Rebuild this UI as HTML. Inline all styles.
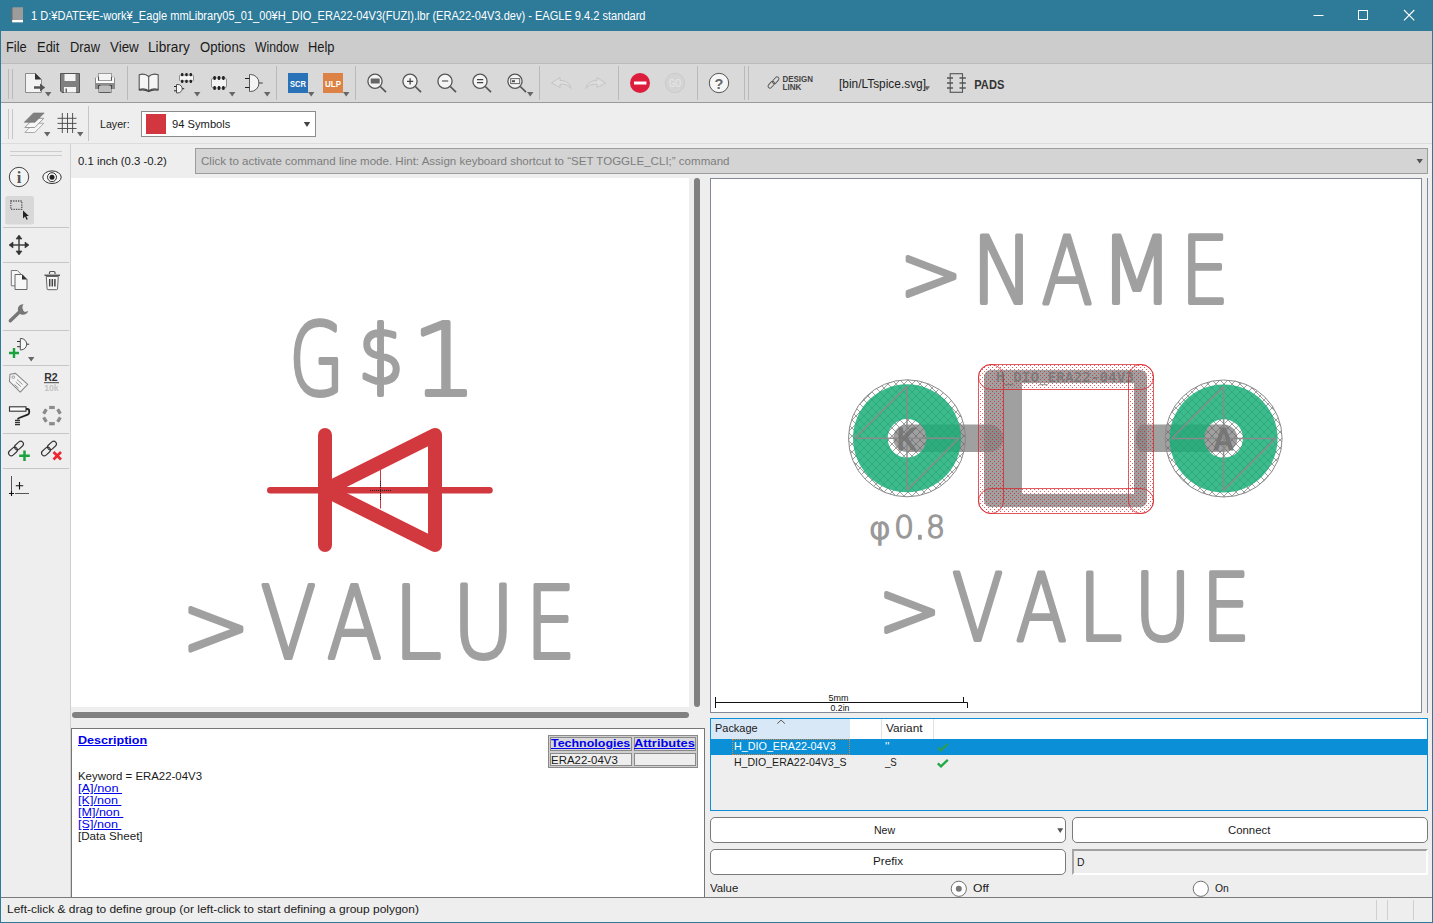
<!DOCTYPE html>
<html>
<head>
<meta charset="utf-8">
<title>EAGLE</title>
<style>
*{box-sizing:border-box;margin:0;padding:0}
html,body{width:1433px;height:923px;overflow:hidden;background:#eeeeee;font-family:"Liberation Sans","Noto Sans CJK JP",sans-serif;font-size:12px;color:#1a1a1a}
.abs{position:absolute}
#win{position:absolute;left:0;top:0;width:1433px;height:923px;background:#eeeeee;overflow:hidden}
#title{left:0;top:0;width:1433px;height:31px;background:#2d7a99}
#title .t{position:absolute;left:31px;top:7px;color:#fff;font-size:12.4px;white-space:nowrap;letter-spacing:0}
#menu{left:1px;top:31px;width:1431px;height:33px;background:#cccccc;border-bottom:1px solid #bcbcbc}
#menu span{position:absolute;top:7px;font-size:14.5px;color:#1a1a1a;white-space:nowrap}
#tb1{left:1px;top:64px;width:1431px;height:39px;background:#d9d9d9;border-bottom:1px solid #9a9a9a}
#tb2{left:1px;top:103px;width:1431px;height:41px;background:#eeeeee;border-bottom:1px solid #dcdcdc}
.vsep{position:absolute;width:1px;background:#b4b4b4}
#ltb{left:1px;top:144px;width:70px;height:753px;background:#eeeeee;border-right:1px solid #d0d0d0}
.hsep{position:absolute;left:3px;width:64px;height:1px;background:#c8c8c8}
#lb{left:0;top:31px;width:1px;height:892px;background:#2d7a99}
#rb{left:1432px;top:31px;width:1px;height:892px;background:#2d7a99}
#bb{left:0;top:922px;width:1433px;height:1px;background:#2d7a99}
#coord{left:78px;top:154px;font-size:12px;white-space:nowrap;color:#222}
#cmd{left:195px;top:148px;width:1233px;height:26px;background:#d4d4d4;border:1px solid #9c9c9c}
#cmd span{position:absolute;left:5px;top:4px;color:#7d7d7d;white-space:nowrap;font-size:12px}
#cvL{left:71px;top:178px;width:618px;height:529px;background:#fff}
#cvR{left:710px;top:178px;width:712px;height:535px}
#vsb{left:694px;top:178px;width:6px;height:529px;background:#808080;border-radius:3px}
#hsb{left:72px;top:712px;width:617px;height:6px;background:#808080;border-radius:3px}
#desc{left:71px;top:728px;width:634px;height:169px;background:#fff;border:1px solid #767676;border-bottom:none}
#status{left:1px;top:897px;width:1431px;height:24px;background:#eeeeee;border-top:1px solid #7a7a7a}
#status span{position:absolute;left:5px;top:5px;font-size:12px;white-space:nowrap}
#pkg{left:710px;top:718px;width:718px;height:93px;background:#eeeeee;border:1px solid #0d8fd8}
.btn{position:absolute;background:#fff;border:1px solid #7a7a7a;border-radius:5px;text-align:center;font-size:12px;line-height:24px}
a{color:#0000ee}
.dl{font-size:12px;line-height:12px;white-space:nowrap;transform-origin:0 0;transform:scaleX(.93);color:#111}
a.dl{color:#0000ee;text-decoration:underline}
.tc{border:1px solid #8a8a8a;font-size:12px;line-height:12px;white-space:nowrap;overflow:hidden}
.tc a{position:absolute;left:1px;top:0;font-weight:bold;text-decoration:underline;color:#0000ee;transform-origin:0 0}
.tc span{position:absolute;left:1px;top:0;color:#111;transform-origin:0 0;transform:scaleX(.93)}
.pl{font-size:12px;line-height:14px;white-space:nowrap;transform-origin:0 0;transform:scaleX(.93);color:#1a1a1a}
.bl{position:absolute;top:5px;font-size:12px;line-height:14px;white-space:nowrap;transform-origin:0 0;transform:scaleX(.93);color:#1a1a1a}
.f{position:absolute;white-space:nowrap;transform-origin:0 0;font-size:12px;line-height:12px;color:#1a1a1a;text-decoration:none}
a.f{color:#0000ee;text-decoration:underline}
.f.b{font-weight:bold}.f.w{color:#fff}.f.g{color:#7d7d7d}
/*FIT*/
#tt{left:30.6px;top:9.9px;font-size:12.0px;line-height:12.0px;transform:scaleX(0.9207)}
#m1{left:6.2px;top:39.9px;font-size:14.0px;line-height:14.0px;transform:scaleX(0.9175)}
#m2{left:37.3px;top:39.9px;font-size:14.0px;line-height:14.0px;transform:scaleX(0.9244)}
#m3{left:70.2px;top:39.9px;font-size:14.0px;line-height:14.0px;transform:scaleX(0.9213)}
#m4{left:109.9px;top:39.9px;font-size:14.0px;line-height:14.0px;transform:scaleX(0.9570)}
#m5{left:148.3px;top:39.9px;font-size:14.0px;line-height:14.0px;transform:scaleX(0.9767)}
#m6{left:200.1px;top:39.9px;font-size:14.0px;line-height:14.0px;transform:scaleX(0.9389)}
#m7{left:254.6px;top:39.9px;font-size:14.0px;line-height:14.0px;transform:scaleX(0.8735)}
#m8{left:308.1px;top:39.9px;font-size:14.0px;line-height:14.0px;transform:scaleX(0.9202)}
#tly{left:100.2px;top:119.2px;font-size:11.0px;line-height:11.0px;transform:scaleX(0.9680)}
#tls{left:172.3px;top:119.2px;font-size:11.0px;line-height:11.0px;transform:scaleX(1.0159)}
#tco{left:77.9px;top:155.7px;font-size:11.0px;line-height:11.0px;transform:scaleX(1.0299)}
#tcm{left:201.1px;top:155.7px;font-size:11.0px;line-height:11.0px;transform:scaleX(1.0491)}
#d0{left:78.0px;top:735.2px;font-size:11.5px;line-height:11.5px;transform:scaleX(1.0938)}
#d1{left:78.0px;top:771.3px;font-size:11.0px;line-height:11.0px;transform:scaleX(1.0373)}
#d2{left:78.0px;top:783.2px;font-size:11.0px;line-height:11.0px;transform:scaleX(1.1629)}
#d3{left:78.0px;top:795.2px;font-size:11.0px;line-height:11.0px;transform:scaleX(1.1445)}
#d4{left:78.0px;top:807.2px;font-size:11.0px;line-height:11.0px;transform:scaleX(1.1396)}
#d5{left:78.0px;top:819.3px;font-size:11.0px;line-height:11.0px;transform:scaleX(1.1445)}
#d6{left:78.0px;top:831.2px;font-size:11.0px;line-height:11.0px;transform:scaleX(1.0563)}
#d7{left:550.6px;top:738.0px;font-size:11.5px;line-height:11.5px;transform:scaleX(1.0821)}
#d8{left:634.1px;top:738.0px;font-size:11.5px;line-height:11.5px;transform:scaleX(1.1194)}
#d9{left:551.1px;top:754.5px;font-size:11.0px;line-height:11.0px;transform:scaleX(1.0402)}
#p1{left:715.1px;top:723.0px;font-size:11.0px;line-height:11.0px;transform:scaleX(0.9950)}
#p2{left:886.1px;top:723.0px;font-size:11.0px;line-height:11.0px;transform:scaleX(1.0721)}
#p3{left:734.0px;top:741.0px;font-size:11.0px;line-height:11.0px;transform:scaleX(0.9783)}
#p4{left:884.6px;top:741.0px;font-size:11.0px;line-height:11.0px;transform:scaleX(1.0230)}
#p5{left:734.0px;top:757.3px;font-size:11.0px;line-height:11.0px;transform:scaleX(0.9591)}
#p6{left:884.6px;top:757.3px;font-size:11.0px;line-height:11.0px;transform:scaleX(0.8761)}
#b1{left:874.3px;top:824.6px;font-size:11.0px;line-height:11.0px;transform:scaleX(0.9584)}
#b2{left:1228.3px;top:824.7px;font-size:11.0px;line-height:11.0px;transform:scaleX(1.0321)}
#b3{left:873.0px;top:856.4px;font-size:11.0px;line-height:11.0px;transform:scaleX(1.0667)}
#b4{left:1077.2px;top:856.5px;font-size:11.0px;line-height:11.0px;transform:scaleX(0.9430)}
#b5{left:710.1px;top:883.0px;font-size:11.0px;line-height:11.0px;transform:scaleX(1.0356)}
#b6{left:972.5px;top:883.0px;font-size:11.0px;line-height:11.0px;transform:scaleX(1.0977)}
#b7{left:1214.6px;top:883.2px;font-size:11.0px;line-height:11.0px;transform:scaleX(0.9396)}
#ts{left:7.1px;top:904.3px;font-size:11.0px;line-height:11.0px;transform:scaleX(1.0883)}
/*/FIT*/
</style>
</head>
<body>
<div id="win">
<div id="title" class="abs"><svg class="abs" style="left:0;top:0" width="1433" height="31">
<path d="M12 8l1.500-0.800h9.500v15h-11z" fill="#9c9c9c"/><path d="M11.300 8.200l1.200-.8v15h-1.200z" fill="#6a6a6a"/><rect x="12.200" y="20" width="10.800" height="2.300" fill="#fff"/>
<path d="M1313.500 15.500h10" stroke="#fff" stroke-width="1"/>
<rect x="1358.500" y="10.500" width="9" height="9" fill="none" stroke="#fff" stroke-width="1"/>
<path d="M1404 10l10.300 10.300M1414.300 10l-10.300 10.300" stroke="#fff" stroke-width="1.100"/>
</svg></div>
<div id="menu" class="abs"></div>
<div id="tb1" class="abs">
<svg class="abs" style="left:0;top:0" width="1431" height="38" viewBox="1 64 1431 38">
<defs>
<path id="dd" d="M0 0h6.4l-3.2 4.6z" fill="#666"/>
<g id="mag"><circle cx="0" cy="0" r="7.1" fill="#f4f4f4" stroke="#555" stroke-width="1.3"/><path d="M5.3 5.3L11 11" stroke="#555" stroke-width="1.7" stroke-linecap="butt"/></g>
</defs>
<g stroke="#b9b9b9" stroke-width="1">
<path d="M8.5 69v30M12.5 69v30M127.5 66v34M276.5 66v34M355.5 66v34M539.5 66v34M618.5 66v34M697.5 66v34M744.5 66v34M748.5 66v34"/>
</g>
<!-- new/export doc -->
<path d="M25.5 73.5h10l6 6v13h-16z" fill="#f3f3f3" stroke="#8c8c8c" stroke-width="1"/>
<path d="M35 73l6.5 6.5H35z" fill="#333"/>
<path d="M34 86.3h6v-2.8l5.2 4-5.2 4v-2.8h-6z" fill="#555"/>
<use href="#dd" x="45" y="92"/>
<!-- save -->
<path d="M60.5 73.5h19v19h-17.5l-1.500-1.5z" fill="#808080" stroke="#555" stroke-width="1"/>
<rect x="64.500" y="74" width="11" height="7" fill="#f4f4f4"/>
<rect x="64" y="87" width="12" height="5.500" fill="#f4f4f4"/>
<rect x="65.500" y="88.500" width="1.500" height="4" fill="#666"/>
<!-- print -->
<rect x="95.500" y="76.800" width="19" height="7" rx="1" fill="#fcfcfc" stroke="#b4b4b4" stroke-width=".9"/>
<rect x="95" y="83" width="20" height="6" fill="#8c8c8c"/>
<path d="M95.500 78v11M114.500 78v11" stroke="#8a8a8a" stroke-width="1"/>
<rect x="98.500" y="73.500" width="13" height="7" fill="#f4f4f4" stroke="#9c9c9c" stroke-width="1"/>
<path d="M98.500 77v3.500M111.500 77v3.500" stroke="#555" stroke-width="1.100"/>
<rect x="98.500" y="85.500" width="13" height="7" fill="#bebebe" stroke="#9a9a9a" stroke-width="1"/>
<path d="M98.500 85v4M111.500 85v4M98.500 85.500h2M109.500 85.500h2" stroke="#4a4a4a" stroke-width="1.100"/>
<path d="M99.500 92.500h11" stroke="#5a5a5a" stroke-width="1"/>
<!-- book -->
<path d="M148.700 76.500c-2.500-2.300-6.500-2.800-9.500-1.700v14.700c3-1 7-.6 9.500 1.300c2.500-1.900 6.500-2.300 9.500-1.300v-14.700c-3-1.100-7-.6-9.500 1.700z" fill="#f6f6f6" stroke="#555" stroke-width="1.100"/>
<path d="M148.700 76.500v14.300" stroke="#555" stroke-width="1.100"/>
<path d="M139 90.200c3.500-.8 7-.3 9.700 1.300c2.700-1.600 6.200-2.100 9.700-1.300" fill="none" stroke="#444" stroke-width="1.300"/>
<!-- device: chip + gate -->
<rect x="179.500" y="75" width="14" height="6" rx="1" fill="#f4f4f4" stroke="#777" stroke-width=".8"/>
<g fill="#222"><rect x="181" y="73" width="2.400" height="3.200" rx="1"/><rect x="185.300" y="73" width="2.400" height="3.200" rx="1"/><rect x="189.600" y="73" width="2.400" height="3.200" rx="1"/><rect x="181" y="79.800" width="2.400" height="3.200" rx="1"/><rect x="185.300" y="79.800" width="2.400" height="3.200" rx="1"/><rect x="189.600" y="79.800" width="2.400" height="3.200" rx="1"/></g>
<path d="M176.500 84.500h1.500a4.200 4.200 0 0 1 0 8.400h-1.500z" fill="#f4f4f4" stroke="#444" stroke-width=".9"/>
<path d="M174 86.500h2.500M174 90.800h2.500M182.200 88.700h2" stroke="#222" stroke-width="1"/>
<use href="#dd" x="194" y="92"/>
<!-- package -->
<rect x="211.500" y="78" width="15" height="10" rx="2" fill="#f4f4f4" stroke="#777" stroke-width=".8"/>
<g fill="#222"><rect x="213.300" y="76" width="2.600" height="4" rx="1.200"/><rect x="217.700" y="76" width="2.600" height="4" rx="1.200"/><rect x="222.100" y="76" width="2.600" height="4" rx="1.200"/><rect x="213.300" y="86" width="2.600" height="4" rx="1.200"/><rect x="217.700" y="86" width="2.600" height="4" rx="1.200"/><rect x="222.100" y="86" width="2.600" height="4" rx="1.200"/></g>
<use href="#dd" x="229" y="92"/>
<!-- gate -->
<path d="M249.500 74.500h1a8.500 8.500 0 0 1 0 17h-1z" fill="#f4f4f4" stroke="#555" stroke-width="1"/>
<path d="M245 78.500h4.500M245 87.500h4.500" stroke="#222" stroke-width="1.200"/>
<path d="M258.500 83h4.200" stroke="#666" stroke-width="1.400"/>
<use href="#dd" x="264" y="92"/>
<!-- SCR / ULP -->
<rect x="288" y="73" width="20" height="20" fill="#2a72b8"/>
<text x="298" y="86.800" font-family="Liberation Sans, sans-serif" font-weight="bold" font-size="9.500" fill="#fff" text-anchor="middle" textLength="16" lengthAdjust="spacingAndGlyphs">SCR</text>
<use href="#dd" x="308" y="92"/>
<rect x="323" y="73" width="20" height="20" fill="#dc8244"/>
<text x="333" y="86.800" font-family="Liberation Sans, sans-serif" font-weight="bold" font-size="9.500" fill="#fff" text-anchor="middle" textLength="16" lengthAdjust="spacingAndGlyphs">ULP</text>
<use href="#dd" x="343" y="92"/>
<!-- zoom icons -->
<use href="#mag" x="375" y="81.200"/><rect x="370.700" y="78.500" width="9" height="5" fill="#666" rx=".5"/>
<use href="#mag" x="410" y="81.200"/><path d="M407 81.300h6.200M410.100 78.200v6.200" stroke="#444" stroke-width="1.300"/>
<use href="#mag" x="445" y="81.200"/><path d="M442 81h6.200" stroke="#777" stroke-width="1.500"/>
<use href="#mag" x="480" y="81.200"/><path d="M477 79.700h6.200M477 82.600h6.200" stroke="#444" stroke-width="1.200"/>
<use href="#mag" x="515" y="81.200"/><rect x="510.700" y="78.600" width="9" height="5" fill="#f4f4f4" stroke="#666" stroke-width="1"/><rect x="512" y="80.200" width="3" height="2" fill="#555"/>
<use href="#dd" x="527" y="92"/>
<!-- undo / redo -->
<path d="M551.500 83l8.500-5.500v3c5 0 10 2 11 8c-2.500-3.500-6-4.500-11-4.300v3.300z" fill="#dedede" stroke="#c4c4c4" stroke-width="1" stroke-linejoin="round"/>
<path d="M605.500 83l-8.500-5.500v3c-5 0-10 2-11 8c2.500-3.500 6-4.500 11-4.300v3.300z" fill="#dedede" stroke="#c4c4c4" stroke-width="1" stroke-linejoin="round"/>
<!-- stop -->
<circle cx="640" cy="83" r="10" fill="#dc1e3c"/><rect x="634" y="81.500" width="12.400" height="3" fill="#fff"/>
<!-- go -->
<circle cx="675" cy="83" r="9.700" fill="#d4d4d4" stroke="#cbcbcb" stroke-width="1"/>
<text x="675" y="86.800" font-family="Liberation Sans, sans-serif" font-size="10.500" fill="#e8e8e8" text-anchor="middle" textLength="12" lengthAdjust="spacingAndGlyphs">GO</text>
<!-- help -->
<circle cx="719" cy="83" r="9.700" fill="#f6f6f6" stroke="#555" stroke-width="1"/>
<text x="719" y="88.500" font-family="Liberation Sans, sans-serif" font-weight="bold" font-size="14.500" fill="#666" text-anchor="middle">?</text>
<!-- design link -->
<g fill="none" stroke="#5a5a5a" stroke-width=".95"><rect x="-3.900" y="-1.900" width="7.800" height="3.800" rx="1.900" transform="translate(771.300 84.700) rotate(-48)"/><rect x="-3.900" y="-1.900" width="7.800" height="3.800" rx="1.900" transform="translate(775.700 80.300) rotate(-48)"/></g>
<text x="782.500" y="81.900" font-family="Liberation Sans, sans-serif" font-weight="bold" font-size="8.400" fill="#444" textLength="30.500" lengthAdjust="spacingAndGlyphs">DESIGN</text>
<text x="782.500" y="89.700" font-family="Liberation Sans, sans-serif" font-weight="bold" font-size="8.400" fill="#444" textLength="19" lengthAdjust="spacingAndGlyphs">LINK</text>
<text x="839" y="87.500" font-family="Liberation Sans, sans-serif" font-size="12" fill="#222" textLength="87" lengthAdjust="spacingAndGlyphs">[bin/LTspice.svg]</text>
<path d="M924.200 86.300h5.800l-2.900 4.200z" fill="#666"/>
<!-- PADS -->
<rect x="950.200" y="73.700" width="12.300" height="18.600" fill="none" stroke="#555" stroke-width="1.100"/>
<path d="M947 78h6M947 83h6M947 88h6M959.500 78h6.300M959.500 83h6.300M959.500 88h6.300" stroke="#555" stroke-width="1.700"/>
<text x="974.300" y="88.500" font-family="Liberation Sans, sans-serif" font-weight="bold" font-size="12.300" fill="#333" textLength="30" lengthAdjust="spacingAndGlyphs">PADS</text>
</svg>
</div>
<div id="tb2" class="abs">
<svg class="abs" style="left:0;top:0" width="400" height="40" viewBox="1 103 400 40">
<path d="M8.500 109v30M12.500 109v30M88.500 106v35" stroke="#c6c6c6" stroke-width="1"/>
<path d="M24.800 132.500l9-9.200h10l-9 9.200z" fill="#f7f7f7" stroke="#aaa" stroke-width="1"/>
<path d="M24.800 127.500l9-9.200h10l-9 9.200z" fill="#f7f7f7" stroke="#999" stroke-width="1"/>
<path d="M24.300 122.300l9.200-9.300h10.700l-9.200 9.300z" fill="#808080" stroke="#707070" stroke-width=".6"/>
<path d="M0 0h6.400l-3.200 4.600z" fill="#666" transform="translate(44 132)"/>
<path d="M62.300 113v20M67.500 113v20M72.600 113v20M57.500 118.300h19M57.500 123.400h19M57.500 128.500h19" stroke="#444" stroke-width=".9"/>
<path d="M0 0h6.400l-3.200 4.600z" fill="#666" transform="translate(77 132)"/>
</svg>
<div class="abs" style="left:140px;top:8px;width:175px;height:26px;background:#fff;border:1px solid #8c8c8c"></div>
<div class="abs" style="left:145px;top:11px;width:20px;height:20px;background:#d2373f"></div>
<svg class="abs" style="left:301px;top:18px" width="10" height="8"><path d="M1.800 1h6.400l-3.200 5z" fill="#444"/></svg>
</div>
<div id="ltb" class="abs">
<svg class="abs" style="left:0;top:0" width="70" height="400" viewBox="1 144 70 400">
<path d="M10 151.500h52M10 155.500h52" stroke="#cdcdcd" stroke-width="1"/>
<path d="M3 227.500h66M3 262.500h66M3 330.500h66M3 365.500h66M3 433.500h66M3 468.500h66" stroke="#c6c6c6" stroke-width="1"/>
<!-- info -->
<circle cx="19" cy="177" r="9.700" fill="#f4f4f4" stroke="#444" stroke-width="1"/>
<text x="19" y="182.600" font-family="Liberation Serif, serif" font-weight="bold" font-size="16.500" fill="#555" text-anchor="middle">i</text>
<!-- eye -->
<ellipse cx="52" cy="177.200" rx="9.200" ry="6.300" fill="#f6f6f6" stroke="#333" stroke-width="1"/>
<circle cx="52" cy="177.200" r="4.500" fill="#f6f6f6" stroke="#333" stroke-width="1"/>
<circle cx="52" cy="177.200" r="2.500" fill="#222"/>
<!-- group (selected) -->
<rect x="5.200" y="196" width="28.800" height="28.600" rx="2.500" fill="#d8d8d8"/>
<rect x="10.800" y="201" width="11" height="8.400" fill="none" stroke="#555" stroke-width="1.300" stroke-dasharray="1.300 1.100"/>
<path d="M23 210.500v8l2-1.900l1.500 3.200l1.300-.6l-1.500-3.100h2.600z" fill="#222"/>
<!-- move -->
<path d="M19 236.500v17M10.500 245h17" stroke="#444" stroke-width="1.500"/>
<path d="M19 235l3 4h-6zM19 255l3-4h-6zM9 245l4-3v6zM29 245l-4-3v6z" fill="#333" stroke="#333" stroke-width=".6" stroke-linejoin="round"/>
<!-- copy -->
<path d="M11.300 270.500h6l3.500 3.500v11.800h-9.500z" fill="#f7f7f7" stroke="#777" stroke-width="1"/>
<path d="M15 274.500h7l5 5v10h-12z" fill="#f7f7f7" stroke="#666" stroke-width="1"/>
<path d="M22 274.300l5.200 5.200h-5.200z" fill="#333"/>
<!-- trash -->
<path d="M46.300 276.500h12l-.8 12.500q-.1 .7-.8 .7h-8.800q-.7 0-.8-.7z" fill="#f6f6f6" stroke="#666" stroke-width="1"/>
<path d="M44.500 275.300h15.500" stroke="#555" stroke-width="1.500"/>
<path d="M49.500 274v-1.500q0-1 1-1h3.500q1 0 1 1v1.500" fill="none" stroke="#555" stroke-width="1.200"/>
<path d="M49.700 279v7.500M52.300 279v7.500M54.900 279v7.500" stroke="#444" stroke-width="1.500"/>
<!-- wrench -->
<path d="M10.300 320.800L21.500 310" stroke="#777" stroke-width="3.400" stroke-linecap="round"/>
<path d="M23.500 304.200a5.300 5.300 0 1 0 4.700 6.700l-3.300 1.100l-2.700-2.300l.4-3.700z" fill="#777"/>
<!-- add gate -->
<path d="M20.300 338.500h.7a5.700 5.700 0 0 1 0 11.400h-.7z" fill="#f7f7f7" stroke="#444" stroke-width=".9"/>
<path d="M17 341.500h3.300M17 346.700h3.300M26.700 344.200h2.500" stroke="#333" stroke-width="1"/>
<path d="M14 348v10M9 353h10" stroke="#1aa33c" stroke-width="2.400"/>
<path d="M0 0h6.400l-3.200 4.600z" fill="#666" transform="translate(28 357)"/>
<!-- tag -->
<path d="M10 374.200l5.500-.8l12.200 11l-7.500 7.800l-10.800-10.800z" fill="#f4f4f4" stroke="#8a8a8a" stroke-width="1.100" stroke-linejoin="round"/>
<circle cx="13.300" cy="377.200" r="1.300" fill="none" stroke="#888" stroke-width=".8"/>
<path d="M17 379.500l5.500 5M15.800 382l5 4.600M14.500 384.500l4 3.700" stroke="#8a8a8a" stroke-width=".9"/>
<!-- R2 10k -->
<text x="44.200" y="381.300" font-family="Liberation Sans, sans-serif" font-weight="bold" font-size="10" fill="#333" textLength="13.500" lengthAdjust="spacingAndGlyphs">R2</text>
<path d="M44 382.700h15" stroke="#444" stroke-width="1"/>
<text x="44.200" y="391.200" font-family="Liberation Sans, sans-serif" font-weight="bold" font-size="9.500" fill="#c4c4c4" textLength="14.500" lengthAdjust="spacingAndGlyphs">10k</text>
<!-- paint roller -->
<rect x="9.500" y="406.800" width="16.500" height="4.400" fill="#fafafa" stroke="#333" stroke-width="1.100"/>
<path d="M26 409h1.200q2 0 2 2v1.500q0 1.600-1.500 2.200l-8.700 3.300q-1.200.5-1.200 1.500" fill="none" stroke="#222" stroke-width="1.800"/>
<path d="M15 420.300h5M15 422.400h5M15 424.500h5" stroke="#333" stroke-width="1.300"/>
<!-- ring of pads -->
<g fill="#8c8c8c" stroke="#777" stroke-width=".5">
<rect x="-2.300" y="-1.300" width="4.600" height="2.600" transform="translate(52 407.500)"/>
<rect x="-2.300" y="-1.300" width="4.600" height="2.600" transform="translate(52 423.700)"/>
<rect x="-2.300" y="-1.300" width="4.600" height="2.600" transform="translate(45 411.500) rotate(-60)"/>
<rect x="-2.300" y="-1.300" width="4.600" height="2.600" transform="translate(59 411.500) rotate(60)"/>
<rect x="-2.300" y="-1.300" width="4.600" height="2.600" transform="translate(45 419.600) rotate(60)"/>
<rect x="-2.300" y="-1.300" width="4.600" height="2.600" transform="translate(59 419.600) rotate(-60)"/>
</g>
<!-- link + -->
<g fill="none" stroke="#333" stroke-width="1.100"><rect x="-5" y="-2.700" width="10" height="5.400" rx="2.700" transform="translate(13 451.500) rotate(-42)"/><rect x="-5" y="-2.700" width="10" height="5.400" rx="2.700" transform="translate(19 445.500) rotate(-42)"/></g>
<path d="M24.500 450.500v10.500M19.200 455.800h10.600" stroke="#1aa33c" stroke-width="2.500"/>
<!-- link x -->
<g fill="none" stroke="#333" stroke-width="1.100"><rect x="-5" y="-2.700" width="10" height="5.400" rx="2.700" transform="translate(46 451.500) rotate(-42)"/><rect x="-5" y="-2.700" width="10" height="5.400" rx="2.700" transform="translate(52 445.500) rotate(-42)"/></g>
<path d="M53.500 452l7.500 7.500M61 452l-7.500 7.500" stroke="#ee2630" stroke-width="2.600"/>
<!-- origin -->
<path d="M11.500 476v15.500M15 493.500h14" stroke="#555" stroke-width="1"/>
<path d="M11.500 491v5M9 493.500h5" stroke="#111" stroke-width="1.100"/>
<path d="M19.500 482v7.400M15.800 485.700h7.400" stroke="#111" stroke-width="1.100"/>
</svg>
</div>
<div id="cmd" class="abs"><svg class="abs" style="left:1219px;top:9px" width="10" height="7"><path d="M1.500 1h6.400l-3.200 4.600z" fill="#555"/></svg></div>
<div id="cvL" class="abs">
<svg class="abs" style="left:0;top:0" width="618" height="529" viewBox="0 0 618 529">
<text transform="translate(0 216.70) scale(0.8855 1)" font-family="DejaVu Sans Light, DejaVu Sans, sans-serif" font-weight="200" font-size="99.45" fill="#a0a0a0" stroke="#a0a0a0" stroke-width="4.20" stroke-linejoin="round" stroke-linecap="round" vector-effect="non-scaling-stroke"><tspan x="246.38" y="0.00" textLength="62.08" lengthAdjust="spacingAndGlyphs">G</tspan><tspan x="324.58" y="-11.75" font-size="79.96" textLength="50.87" lengthAdjust="spacingAndGlyphs">$</tspan><tspan x="384.71" y="0.00" textLength="73.49" lengthAdjust="spacingAndGlyphs">1</tspan></text>
<text transform="translate(0 479.80) scale(0.8436 1)" font-family="DejaVu Sans Light, DejaVu Sans, sans-serif" font-weight="200" font-size="100.27" fill="#a0a0a0" stroke="#a0a0a0" stroke-width="4.20" stroke-linejoin="round" stroke-linecap="round" vector-effect="non-scaling-stroke"><tspan x="131.41" y="-2.08" font-size="85.64" textLength="80.92" lengthAdjust="spacingAndGlyphs">&gt;</tspan><tspan x="224.80" y="0.00" textLength="65.59" lengthAdjust="spacingAndGlyphs">V</tspan><tspan x="303.57" y="0.00" textLength="65.15" lengthAdjust="spacingAndGlyphs">A</tspan><tspan x="382.21" y="0.00" textLength="57.07" lengthAdjust="spacingAndGlyphs">L</tspan><tspan x="452.37" y="0.00" textLength="73.39" lengthAdjust="spacingAndGlyphs">U</tspan><tspan x="538.76" y="0.00" textLength="59.61" lengthAdjust="spacingAndGlyphs">E</tspan></text>
<g transform="translate(-71 -178)" fill="none" stroke="#d2393e" stroke-linecap="round" stroke-linejoin="round">
<path d="M270.300 490.300H489.500" stroke-width="6.500"/>
<path d="M325 435V545" stroke-width="14"/>
<path d="M435 435V545L325 490Z" stroke-width="14"/>
<path d="M380.500 469.500v39" stroke-width="1" stroke-linecap="butt"/>
<path d="M370 490.500h21M380.500 481v19" stroke="#222" stroke-width="1" stroke-dasharray="1 1" stroke-linecap="butt"/>
</g>
</svg>
</div>
<div id="vsb" class="abs"></div>
<div id="hsb" class="abs"></div>
<div id="cvR" class="abs">
<svg class="abs" style="left:0;top:0" width="712" height="535" viewBox="710 178 712 535">
<defs>
<pattern id="hatch" width="8" height="8" patternUnits="userSpaceOnUse"><path d="M-1 -1L9 9M-1 9L9 -1M-1 7L1 9M7 -1L9 1M-1 1L1 -1M7 9L9 7" stroke="rgba(95,95,95,.72)" stroke-width=".85" fill="none"/></pattern>
<pattern id="dots" width="4" height="4" patternUnits="userSpaceOnUse" x="978" y="365"><rect x="0" y="0" width="1" height="1" fill="rgba(214,30,36,.72)"/><rect x="2" y="2" width="1" height="1" fill="rgba(214,30,36,.72)"/></pattern>
</defs>
<rect x="710.500" y="178.500" width="711" height="534" fill="#fff" stroke="#828a98" stroke-width="1"/>
<text transform="translate(0 302.80) scale(0.9023 1)" font-family="DejaVu Sans Light, DejaVu Sans, sans-serif" font-weight="200" font-size="91.77" fill="#a0a0a0" stroke="#a0a0a0" stroke-width="4.20" stroke-linejoin="round" stroke-linecap="round" vector-effect="non-scaling-stroke"><tspan x="997.18" y="-1.99" font-size="77.76" textLength="69.42" lengthAdjust="spacingAndGlyphs">&gt;</tspan><tspan x="1076.97" y="0.00" textLength="68.65" lengthAdjust="spacingAndGlyphs">N</tspan><tspan x="1154.68" y="0.00" textLength="56.27" lengthAdjust="spacingAndGlyphs">A</tspan><tspan x="1219.47" y="0.00" textLength="81.23" lengthAdjust="spacingAndGlyphs">M</tspan><tspan x="1308.26" y="0.00" textLength="53.74" lengthAdjust="spacingAndGlyphs">E</tspan></text>
<text transform="translate(0 640.00) scale(0.8421 1)" font-family="DejaVu Sans Light, DejaVu Sans, sans-serif" font-weight="200" font-size="92.04" fill="#a0a0a0" stroke="#a0a0a0" stroke-width="4.20" stroke-linejoin="round" stroke-linecap="round" vector-effect="non-scaling-stroke"><tspan x="1043.01" y="-2.58" font-size="77.96" textLength="74.55" lengthAdjust="spacingAndGlyphs">&gt;</tspan><tspan x="1130.87" y="0.00" textLength="60.34" lengthAdjust="spacingAndGlyphs">V</tspan><tspan x="1206.56" y="0.00" textLength="60.29" lengthAdjust="spacingAndGlyphs">A</tspan><tspan x="1280.42" y="0.00" textLength="52.10" lengthAdjust="spacingAndGlyphs">L</tspan><tspan x="1346.85" y="0.00" textLength="67.37" lengthAdjust="spacingAndGlyphs">U</tspan><tspan x="1426.86" y="0.00" textLength="57.93" lengthAdjust="spacingAndGlyphs">E</tspan></text>
<text transform="translate(0 538.20) scale(0.9879 1)" font-family="DejaVu Sans Light, DejaVu Sans, sans-serif" font-weight="200" font-size="32.10" fill="#999" stroke="#999" stroke-width="1.60" stroke-linejoin="round" stroke-linecap="round" vector-effect="non-scaling-stroke"><tspan x="879.50" y="0.90" font-size="29.33" textLength="22.30" lengthAdjust="spacingAndGlyphs">φ</tspan><tspan x="904.89" y="0.00" textLength="20.42" lengthAdjust="spacingAndGlyphs">0</tspan><tspan x="923.51" y="1.00" font-size="55.26" textLength="15.50" lengthAdjust="spacingAndGlyphs">.</tspan><tspan x="937.30" y="0.00" textLength="19.29" lengthAdjust="spacingAndGlyphs">8</tspan></text>
<!-- tPlace grey -->
<path d="M1140.500 424.500H1223.600A13.750 13.750 0 0 1 1223.600 452H1140.500Q1136 445.500 1136 438.200Q1136 431 1140.500 424.500Z" fill="rgba(131,131,131,.77)"/>
<path d="M990.500 376.500H1140.500V500.500H990.500Z" stroke="rgba(131,131,131,.77)" stroke-width="13" stroke-linejoin="round" fill="none"/>
<rect x="997" y="383" width="25" height="111" fill="rgba(131,131,131,.77)"/>
<path d="M907 438.200H989.300" stroke="rgba(131,131,131,.77)" stroke-width="27.500" stroke-linecap="round" fill="none"/>
<g>
<circle cx="907" cy="438.3" r="58.5" fill="url(#hatch)" stroke="#8a8a8a" stroke-width="1"/>
<path d="M853 438.3a54 54 0 1 0 108 0a54 54 0 1 0 -108 0zM887.7 438.3a19.300 19.300 0 1 1 38.600 0a19.300 19.300 0 1 1 -38.600 0z" fill="rgba(25,174,119,.84)" fill-rule="evenodd"/>
<path d="M855 438.3H959M907 386.3V490.3M855 438.3L907 386.3M959 438.3L907 490.3" stroke="#8a8a8a" stroke-width="1.500" fill="none" opacity=".95"/>
</g>
<g>
<circle cx="1223.6" cy="438.5" r="58.5" fill="url(#hatch)" stroke="#8a8a8a" stroke-width="1"/>
<path d="M1169.6 438.5a54 54 0 1 0 108 0a54 54 0 1 0 -108 0zM1204.3 438.5a19.300 19.300 0 1 1 38.600 0a19.300 19.300 0 1 1 -38.600 0z" fill="rgba(25,174,119,.84)" fill-rule="evenodd"/>
<path d="M1171.6 438.5H1275.6M1223.6 386.5V490.5M1171.6 438.5L1223.6 386.5M1275.6 438.5L1223.6 490.5" stroke="#8a8a8a" stroke-width="1.500" fill="none" opacity=".95"/>
</g>
<text x="906.500" y="449.800" font-family="DejaVu Sans Mono, monospace" font-size="31" fill="rgba(115,115,115,.8)" stroke="rgba(115,115,115,.8)" stroke-width="1.200" text-anchor="middle" textLength="19" lengthAdjust="spacingAndGlyphs">K</text>
<text x="1223.500" y="449.800" font-family="DejaVu Sans Mono, monospace" font-size="31" fill="rgba(115,115,115,.8)" stroke="rgba(115,115,115,.8)" stroke-width="1.200" text-anchor="middle" textLength="20" lengthAdjust="spacingAndGlyphs">A</text>
<!-- red keepout -->
<path d="M991 377H1141V501H991Z" stroke="url(#dots)" stroke-width="25" stroke-linejoin="round" fill="none"/>
<g fill="none" stroke="rgba(214,30,36,.8)" stroke-width=".9">
<rect x="978.500" y="364.500" width="175" height="25" rx="12.500"/>
<rect x="978.500" y="488.500" width="175" height="25" rx="12.500"/>
<rect x="978.500" y="364.500" width="25" height="149" rx="12.500"/>
<rect x="1128.500" y="364.500" width="25" height="149" rx="12.500"/>
</g>
<text x="996" y="381.500" font-family="DejaVu Sans Mono, monospace" font-weight="bold" font-size="13.500" fill="rgba(105,105,105,.62)" textLength="138" lengthAdjust="spacingAndGlyphs">H_DIO_ERA22-04V3</text>
<!-- scale -->
<path d="M715.500 697v11M715 702.500H967.500M963.500 697v5.500M967.500 702.500v5.500" stroke="#111" stroke-width="1" fill="none"/>
<text x="838.500" y="701" font-family="Liberation Sans, sans-serif" font-size="9.500" fill="#111" text-anchor="middle" textLength="20" lengthAdjust="spacingAndGlyphs">5mm</text>
<text x="840" y="711" font-family="Liberation Sans, sans-serif" font-size="9.500" fill="#111" text-anchor="middle" textLength="19" lengthAdjust="spacingAndGlyphs">0.2in</text>
</svg>
</div>
<div id="desc" class="abs">
<div class="abs" style="left:476px;top:6px;width:150px;height:33px;background:#cfcfcf;border:1px solid #8a8a8a"></div>
<div class="abs tc" style="left:478px;top:8px;width:82px;height:14px;background:#d9d9d9"></div>
<div class="abs tc" style="left:562px;top:8px;width:62px;height:14px;background:#d9d9d9"></div>
<div class="abs tc" style="left:478px;top:24px;width:82px;height:13px;background:#eeeeee"></div>
<div class="abs tc" style="left:562px;top:24px;width:62px;height:13px;background:#eeeeee"></div>
</div>
<div id="pkg" class="abs">
<div class="abs" style="left:0;top:0;width:716px;height:20px;background:#fff"></div>
<div class="abs" style="left:0;top:0;width:139px;height:20px;background:#d9e8f6"></div>
<div class="abs" style="left:170px;top:0;width:1px;height:20px;background:#e2e2e2"></div>
<div class="abs" style="left:222px;top:0;width:1px;height:20px;background:#e2e2e2"></div>
<svg class="abs" style="left:64px;top:0" width="12" height="6"><path d="M2.300 4.600L6.100 1.100L9.900 4.600" fill="none" stroke="#555" stroke-width="1"/></svg>
<div class="abs" style="left:0;top:20px;width:716px;height:16px;background:#0b8fd6"></div>
<div class="abs" style="left:21px;top:20px;width:118px;height:16px;border:1px dotted #d8863a"></div>
<svg class="abs" style="left:225px;top:23px" width="14" height="11"><path d="M1.800 5.300L5 8.300L11.800 1.800" fill="none" stroke="#2a9d5c" stroke-width="2.300"/></svg>
<svg class="abs" style="left:225px;top:39px" width="14" height="11"><path d="M1.800 5.300L5 8.300L11.800 1.800" fill="none" stroke="#1fa845" stroke-width="2.300"/></svg>
</div>
<div class="btn" style="left:710px;top:817px;width:356px;height:26px"><svg class="abs" style="left:345px;top:10px" width="9" height="6"><path d="M1.200 .3h6l-3 4.600z" fill="#555"/></svg></div>
<div class="btn" style="left:1072px;top:817px;width:356px;height:26px"></div>
<div class="btn" style="left:710px;top:849px;width:356px;height:26px"></div>
<div class="abs" style="left:1072px;top:849px;width:356px;height:26px;background:#eeeeee;border-top:2px solid #a0a0a0;border-left:2px solid #a6a6a6;border-right:2px solid #fff;border-bottom:2px solid #fff"></div>
<svg class="abs" style="left:948px;top:878px" width="22" height="22"><circle cx="10.800" cy="10.800" r="7.600" fill="#fff" stroke="#707070" stroke-width="1"/><circle cx="10.800" cy="10.800" r="3" fill="#777"/></svg>
<svg class="abs" style="left:1190px;top:878px" width="22" height="22"><circle cx="10.800" cy="10.800" r="7.600" fill="#fff" stroke="#707070" stroke-width="1"/></svg>
<div id="status" class="abs"></div>
<div class="abs" style="left:1376px;top:900px;width:1px;height:20px;background:#cfcfcf"></div><div class="abs" style="left:1387px;top:900px;width:1px;height:20px;background:#cfcfcf"></div><div class="abs" style="left:1413px;top:900px;width:1px;height:20px;background:#cfcfcf"></div>
<!--TEXTS-->
<span class="f w" id="tt">1 D:¥DATE¥E-work¥_Eagle mmLibrary05_01_00¥H_DIO_ERA22-04V3(FUZI).lbr (ERA22-04V3.dev) - EAGLE 9.4.2 standard</span>
<span class="f" id="m1">File</span><span class="f" id="m2">Edit</span><span class="f" id="m3">Draw</span><span class="f" id="m4">View</span><span class="f" id="m5">Library</span><span class="f" id="m6">Options</span><span class="f" id="m7">Window</span><span class="f" id="m8">Help</span>
<span class="f" id="tly">Layer:</span><span class="f" id="tls">94 Symbols</span>
<span class="f" id="tco">0.1 inch (0.3 -0.2)</span>
<span class="f g" id="tcm">Click to activate command line mode. Hint: Assign keyboard shortcut to “SET TOGGLE_CLI;” command</span>
<a class="f b" id="d0">Description</a>
<span class="f" id="d1">Keyword = ERA22-04V3</span>
<a class="f" id="d2">[A]/non&nbsp;</a><a class="f" id="d3">[K]/non&nbsp;</a><a class="f" id="d4">[M]/non&nbsp;</a><a class="f" id="d5">[S]/non&nbsp;</a>
<span class="f" id="d6">[Data Sheet]</span>
<a class="f b" id="d7">Technologies</a><a class="f b" id="d8">Attributes</a><span class="f" id="d9">ERA22-04V3</span>
<span class="f" id="p1">Package</span><span class="f" id="p2">Variant</span>
<span class="f w" id="p3">H_DIO_ERA22-04V3</span><span class="f w" id="p4">''</span>
<span class="f" id="p5">H_DIO_ERA22-04V3_S</span><span class="f" id="p6">_S</span>
<span class="f" id="b1">New</span><span class="f" id="b2">Connect</span><span class="f" id="b3">Prefix</span><span class="f" id="b4">D</span>
<span class="f" id="b5">Value</span><span class="f" id="b6">Off</span><span class="f" id="b7">On</span>
<span class="f" id="ts">Left-click &amp; drag to define group (or left-click to start defining a group polygon)</span>
<!--/TEXTS-->
<div class="abs" style="left:1427px;top:178px;width:1px;height:535px;background:#828a98"></div>
<div id="lb" class="abs"></div><div id="rb" class="abs"></div><div id="bb" class="abs"></div>
</div>
</body>
</html>
